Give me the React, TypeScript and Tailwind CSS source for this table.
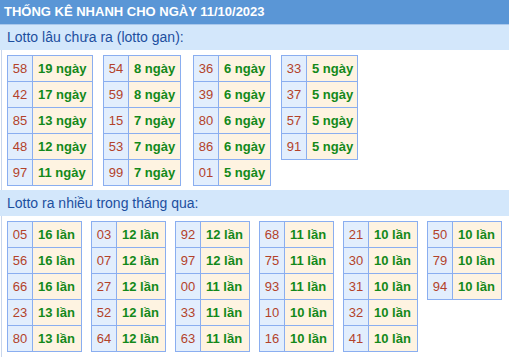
const gan: [string, string][][] = [
  [
    ["58", "19 ngày"],
    ["42", "17 ngày"],
    ["85", "13 ngày"],
    ["48", "12 ngày"],
    ["97", "11 ngày"],
  ],
  [
    ["54", "8 ngày"],
    ["59", "8 ngày"],
    ["15", "7 ngày"],
    ["53", "7 ngày"],
    ["99", "7 ngày"],
  ],
  [
    ["36", "6 ngày"],
    ["39", "6 ngày"],
    ["80", "6 ngày"],
    ["86", "6 ngày"],
    ["01", "5 ngày"],
  ],
  [
    ["33", "5 ngày"],
    ["37", "5 ngày"],
    ["57", "5 ngày"],
    ["91", "5 ngày"],
  ],
];

const nhieu: [string, string][][] = [
  [
    ["05", "16 lần"],
    ["56", "16 lần"],
    ["66", "16 lần"],
    ["23", "13 lần"],
    ["80", "13 lần"],
  ],
  [
    ["03", "12 lần"],
    ["07", "12 lần"],
    ["27", "12 lần"],
    ["52", "12 lần"],
    ["64", "12 lần"],
  ],
  [
    ["92", "12 lần"],
    ["97", "12 lần"],
    ["00", "11 lần"],
    ["33", "11 lần"],
    ["63", "11 lần"],
  ],
  [
    ["68", "11 lần"],
    ["75", "11 lần"],
    ["93", "11 lần"],
    ["10", "10 lần"],
    ["16", "10 lần"],
  ],
  [
    ["21", "10 lần"],
    ["30", "10 lần"],
    ["31", "10 lần"],
    ["32", "10 lần"],
    ["41", "10 lần"],
  ],
  [
    ["50", "10 lần"],
    ["79", "10 lần"],
    ["94", "10 lần"],
  ],
];

function Box({ rows, textW }: { rows: [string, string][]; textW: string }) {
  return (
    <div className="border-l border-t border-[#8aaef0] self-start">
      {rows.map(([num, val]) => (
        <div key={num} className="flex h-[26px]">
          <div className="w-[25px] border-r border-b border-[#8aaef0] bg-[#e2eefd] text-[#b3422a] flex items-center justify-center">
            {num}
          </div>
          <div
            className={`${textW} border-r border-b border-[#8aaef0] bg-[#fef3e1] text-[#13891a] font-bold flex items-center pl-[5px]`}
          >
            {val}
          </div>
        </div>
      ))}
    </div>
  );
}

export default function App() {
  // ---------------------------------------------------------------------------
  return (
    <div className="w-[509px] h-[359px] bg-white text-[13px] font-['Liberation_Sans',Arial,sans-serif] overflow-hidden">
      <div className="h-[25px] bg-[#5a96d6] border-b border-[#a9c8ec] text-white font-bold text-[13px] flex items-center pl-[4px]">
        THỐNG KÊ NHANH CHO NGÀY 11/10/2023
      </div>
      <div className="h-[25px] bg-[#d3e7fb] text-[#1d4f9f] text-[14px] flex items-center pl-[7px]">
        Lotto lâu chưa ra (lotto gan):
      </div>
      <div className="border-l border-[#c8d6ec] ml-[1px] pl-[5px] pt-[5px] pb-[4px] flex gap-[10px]">
        <Box rows={gan[0]} textW="w-[60px]" />
        <Box rows={gan[1]} textW="w-[52px]" />
        <div className="ml-[2px] self-start">
          <Box rows={gan[2]} textW="w-[52px]" />
        </div>
        <Box rows={gan[3]} textW="w-[51px]" />
      </div>
      <div className="h-[26px] bg-[#d3e7fb] text-[#1d4f9f] text-[14px] flex items-center pl-[7px]">
        Lotto ra nhiều trong tháng qua:
      </div>
      <div className="border-l border-[#c8d6ec] ml-[1px] pl-[5px] pt-[5px] pb-[5px] flex gap-[9px]">
        {nhieu.map((rows, i) => (
          <Box key={i} rows={rows} textW="w-[49px]" />
        ))}
      </div>
    </div>
  );
}
